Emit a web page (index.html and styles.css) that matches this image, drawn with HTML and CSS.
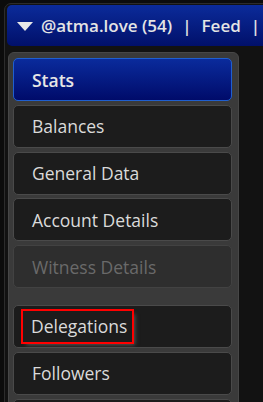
FILE: index.html
```html
<!DOCTYPE html>
<html lang="en">
<head>
    <meta charset="UTF-8">
    <meta name="viewport" content="width=device-width, initial-scale=1.0">
    <title>@atma.love</title>
    <link rel="stylesheet" href="styles.css">
</head>
<body>
    <div class="frame">
        <div class="topbar">
            <svg class="caret" width="16" height="9" viewBox="0 0 16 9"><polygon points="0,0 16,0 8,9" fill="#e8e8e8"/></svg>
            <span class="account">@atma.love (54)</span>
            <span class="sep">|</span>
            <span class="link">Feed</span>
            <span class="sep">|</span>
        </div>

        <div class="main">
            <div class="sidebar">
                <div class="menu">
                    <div class="item active">Stats</div>
                    <div class="item">Balances</div>
                    <div class="item">General Data</div>
                    <div class="item">Account Details</div>
                    <div class="item disabled">Witness Details</div>
                </div>
                <div class="menu second">
                    <div class="item"><span class="focus">Delegations</span></div>
                    <div class="item">Followers</div>
                    <div class="item"></div>
                </div>
            </div>
        </div>
    </div>
</body>
</html>
```

FILE: styles.css
```css
body {
    margin: 0;
    background-color: #0c0c0c;
    font-family: "Open Sans", "Noto Sans", sans-serif;
    overflow: hidden;
    height: 402px;
}
.frame {
    margin: 3px 0 0 4px;
    width: 700px;
    height: 600px;
    border: 1px solid #2c2c2c;
    border-radius: 7px;
    padding: 1px 2px;
    background-color: #121212;
}
.topbar {
    height: 41px;
    display: flex;
    align-items: center;
    padding-left: 10px;
    background: linear-gradient(#0b2b9a, #01106a);
    border-radius: 5px;
    color: #e4e4e4;
    font-size: 17px;
    font-weight: 600;
}
.caret {
    margin-right: 8px;
    margin-top: 1px;
}
.sep {
    margin: 0 10px;
}
.main {
    display: flex;
    margin-top: 6px;
}
.sidebar {
    width: 231px;
    box-sizing: border-box;
    margin-left: 1px;
    padding: 5px 6px 0 4px;
    background-color: #3a3a3a;
    border: 1px solid #474747;
    border-radius: 6px;
    height: 420px;
}
.menu {
    display: flex;
    flex-direction: column;
    gap: 3.75px;
}
.menu.second {
    margin-top: 17px;
}
.item {
    height: 43px;
    box-sizing: border-box;
    display: flex;
    align-items: center;
    padding-left: 18px;
    background-color: #1c1c1c;
    border: 1px solid #4a4a4a;
    border-radius: 5px;
    color: #dadada;
    font-size: 17.5px;
}
.item.active {
    background: linear-gradient(#0a2b9c, #000b6a);
    border-color: #1f5fd0;
    color: #e6e6e6;
    font-weight: 600;
}
.item.disabled {
    background-color: #2e2e2e;
    border-color: #424242;
    color: #6a6a6a;
}
.focus {
    margin-left: -9px;
    padding: 3px 5px 4px 8px;
    outline: 2px solid #ff0000;
    box-shadow: 3px 3px 4px rgba(110, 110, 110, 0.7);
}
```
